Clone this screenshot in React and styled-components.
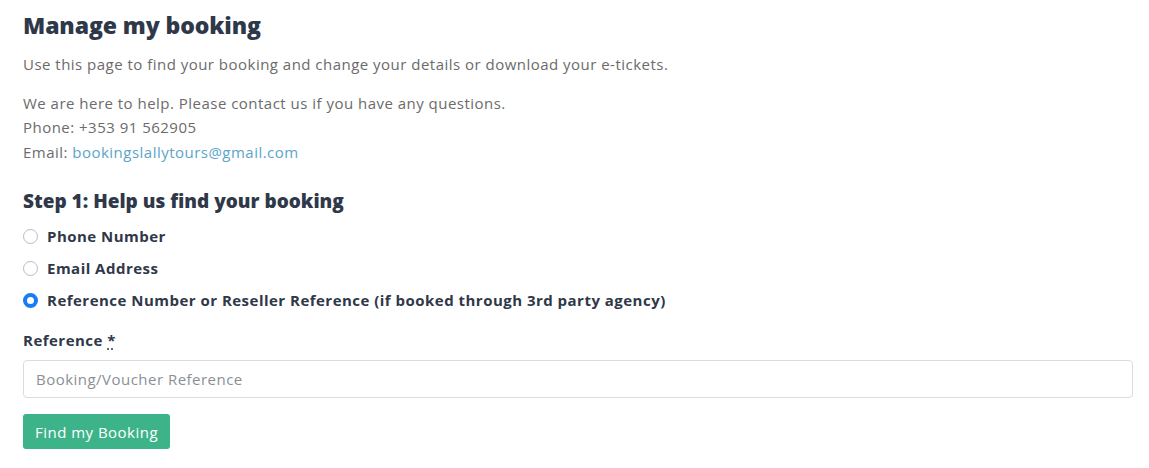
import React from 'react';
import styled, { createGlobalStyle } from 'styled-components';

const GlobalStyle = createGlobalStyle`
  body {
    margin: 0;
    background: #fff;
    font-family: "Open Sans", "Liberation Sans", sans-serif;
  }
`;

const Page = styled.div`
  padding: 9px 16px 0 23px;
  color: #6b6b6b;
  font-size: 15px;
  letter-spacing: 0.48px;
`;

const Title = styled.h1`
  margin: 0 0 11px;
  font-size: 23px;
  line-height: 32px;
  font-weight: 800;
  letter-spacing: -0.1px;
  color: #2f3849;
`;

const Text = styled.p`
  margin: 0 0 ${(p) => p.gap || 14}px;
  line-height: 24.5px;
  font-weight: 400;
`;

const Link = styled.a`
  color: #5aa5c8;
  text-decoration: none;
`;

const StepTitle = styled.h2`
  margin: 0 0 12px;
  font-size: 19px;
  line-height: 26px;
  font-weight: 800;
  letter-spacing: 0;
  color: #2f3849;
`;

const RadioList = styled.div`
  display: flex;
  flex-direction: column;
  gap: 12px;
  margin-bottom: 20px;
`;

const RadioRow = styled.label`
  display: flex;
  align-items: center;
  gap: 9px;
  font-weight: 700;
  color: #2f3849;
  line-height: 20px;
`;

const RadioDot = styled.span`
  width: 15px;
  height: 15px;
  border-radius: 50%;
  box-sizing: border-box;
  border: ${(p) => (p.checked ? '4.5px solid #1a7cf2' : '1px solid #b7bcc3')};
  background: #fff;
`;

const FieldLabel = styled.div`
  font-weight: 700;
  color: #2f3849;
  line-height: 20px;
  margin-bottom: 10px;
`;

const Required = styled.abbr`
  text-decoration: underline dotted;
  text-underline-offset: 3px;
`;

const Input = styled.input`
  display: block;
  box-sizing: border-box;
  width: 100%;
  height: 38px;
  padding: 0 12px;
  border: 1px solid #dcdcdc;
  border-radius: 4px;
  font: inherit;
  font-size: 15px;
  letter-spacing: 0.48px;
  color: #444;
  margin-bottom: 16px;

  &::placeholder {
    color: #8a8f96;
  }
`;

const Button = styled.button`
  height: 35px;
  padding: 0 12px;
  border: none;
  border-radius: 3px;
  background: #3db38a;
  color: #fff;
  font: inherit;
  font-size: 15px;
  letter-spacing: 0.48px;
  cursor: pointer;
`;

const options = [
  { label: 'Phone Number' },
  { label: 'Email Address' },
  { label: 'Reference Number or Reseller Reference (if booked through 3rd party agency)', checked: true },
];

export default function App() {
  return (
    <Page>
      <GlobalStyle />
      <Title>Manage my booking</Title>
      <Text>Use this page to find your booking and change your details or download your e-tickets.</Text>
      <Text gap={24}>
        We are here to help. Please contact us if you have any questions.
        <br />
        Phone: +353 91 562905
        <br />
        Email: <Link href="#">bookingslallytours@gmail.com</Link>
      </Text>
      <StepTitle>Step 1: Help us find your booking</StepTitle>
      <RadioList>
        {options.map((o) => (
          <RadioRow key={o.label}>
            <RadioDot checked={o.checked} />
            {o.label}
          </RadioRow>
        ))}
      </RadioList>
      <FieldLabel>
        Reference <Required title="required">*</Required>
      </FieldLabel>
      <Input placeholder="Booking/Voucher Reference" />
      <Button>Find my Booking</Button>
    </Page>
  );
}
